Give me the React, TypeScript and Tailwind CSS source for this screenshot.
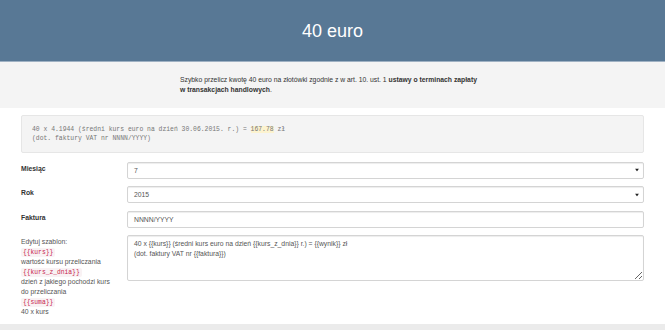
import React from "react";

const sans = { fontFamily: '"Liberation Sans", Arial, sans-serif' };

function Code({ children }: { children: React.ReactNode }) {
  return (
    <div className="h-[10px] leading-[10px]">
      <code className="rounded-[2px] bg-[#f9f2f4] px-[2px] py-[1px] font-['Liberation_Mono',monospace] text-[6.3px] leading-none text-[#c7254e]">
        {children}
      </code>
    </div>
  );
}

function Caret() {
  return (
    <svg
      className="pointer-events-none absolute right-[4px] top-1/2 -translate-y-1/2"
      width="4"
      height="3"
      viewBox="0 0 4 3"
    >
      <path d="M0 0 L4 0 L2 3 Z" fill="#222" />
    </svg>
  );
}

function SelectBox({ value }: { value: string }) {
  return (
    <div className="relative h-[17px] rounded-[2px] border border-[#d4d4d4] bg-white shadow-[inset_0_1px_1px_rgba(0,0,0,0.075)]">
      <div className="px-[6px] text-[6.8px] leading-[15px] text-[#555]">{value}</div>
      <Caret />
    </div>
  );
}

export default function App() {
  return (
    <div className="min-h-[331px] w-[665px] bg-white text-[#333]" style={sans}>
      <header className="flex h-[62px] items-center justify-center border-b-[1px] border-[#9fb1c3] bg-[#587895]">
        <h1 className="text-[18px] font-normal leading-[20px] text-white">40 euro</h1>
      </header>

      <section className="bg-[#f4f4f4] pb-[13px] pt-[13px]">
        <p className="mx-auto w-[305px] text-[6.8px] leading-[10px] text-[#333]">
          Szybko przelicz kwotę 40 euro na złotówki zgodnie z w art. 10. ust. 1{" "}
          <b>ustawy o terminach zapłaty</b>
          <br />
          <b>w transakcjach handlowych</b>.
        </p>
      </section>

      <main className="px-[21px] pb-[7px] pt-[7px]">
        <div className="mb-[9px] rounded-[2px] border border-[#e6e6e6] bg-[#f4f4f4] px-[10px] pb-[8px] pt-[9px] font-['Liberation_Mono',monospace] text-[6.4px] leading-[9.3px] text-[#777]">
          <div>
            40 x 4.1944 (średni kurs euro na dzień 30.06.2015. r.) ={" "}
            <mark className="bg-[#fcf3cf] text-[#777]">167.78</mark> zł
          </div>
          <div>(dot. faktury VAT nr NNNN/YYYY)</div>
        </div>

        <div className="grid grid-cols-[93px_1fr] gap-x-[13px] gap-y-[7.5px] text-[6.8px]">
          <label className="pt-[2px] font-bold leading-[10px]">Miesiąc</label>
          <SelectBox value="7" />

          <label className="pt-[2px] font-bold leading-[10px]">Rok</label>
          <SelectBox value="2015" />

          <label className="pt-[2px] font-bold leading-[10px]">Faktura</label>
          <div className="h-[17px] rounded-[2px] border border-[#d4d4d4] bg-white px-[6px] text-[6.8px] leading-[15px] text-[#555] shadow-[inset_0_1px_1px_rgba(0,0,0,0.075)]">
            NNNN/YYYY
          </div>

          <div className="pt-[2px] leading-[10px] text-[#555]">
            <div>Edytuj szablon:</div>
            <Code>{"{{kurs}}"}</Code>
            <div>wartość kursu przeliczania</div>
            <Code>{"{{kurs_z_dnia}}"}</Code>
            <div>dzień z jakiego pochodzi kurs</div>
            <div>do przeliczania</div>
            <Code>{"{{suma}}"}</Code>
            <div>40 x kurs</div>
          </div>
          <div>
            <textarea
              className="block h-[46px] w-full rounded-[2px] border border-[#d4d4d4] bg-white px-[6px] py-[3px] text-[6.8px] leading-[10px] text-[#555] shadow-[inset_0_1px_1px_rgba(0,0,0,0.075)] outline-none"
              style={sans}
              defaultValue={
                "40 x {{kurs}} (średni kurs euro na dzień {{kurs_z_dnia}} r.) = {{wynik}} zł\n(dot. faktury VAT nr {{faktura}})"
              }
            />
          </div>
        </div>
      </main>
      <div className="h-[6px] bg-[#ebebeb]" />
    </div>
  );
}
